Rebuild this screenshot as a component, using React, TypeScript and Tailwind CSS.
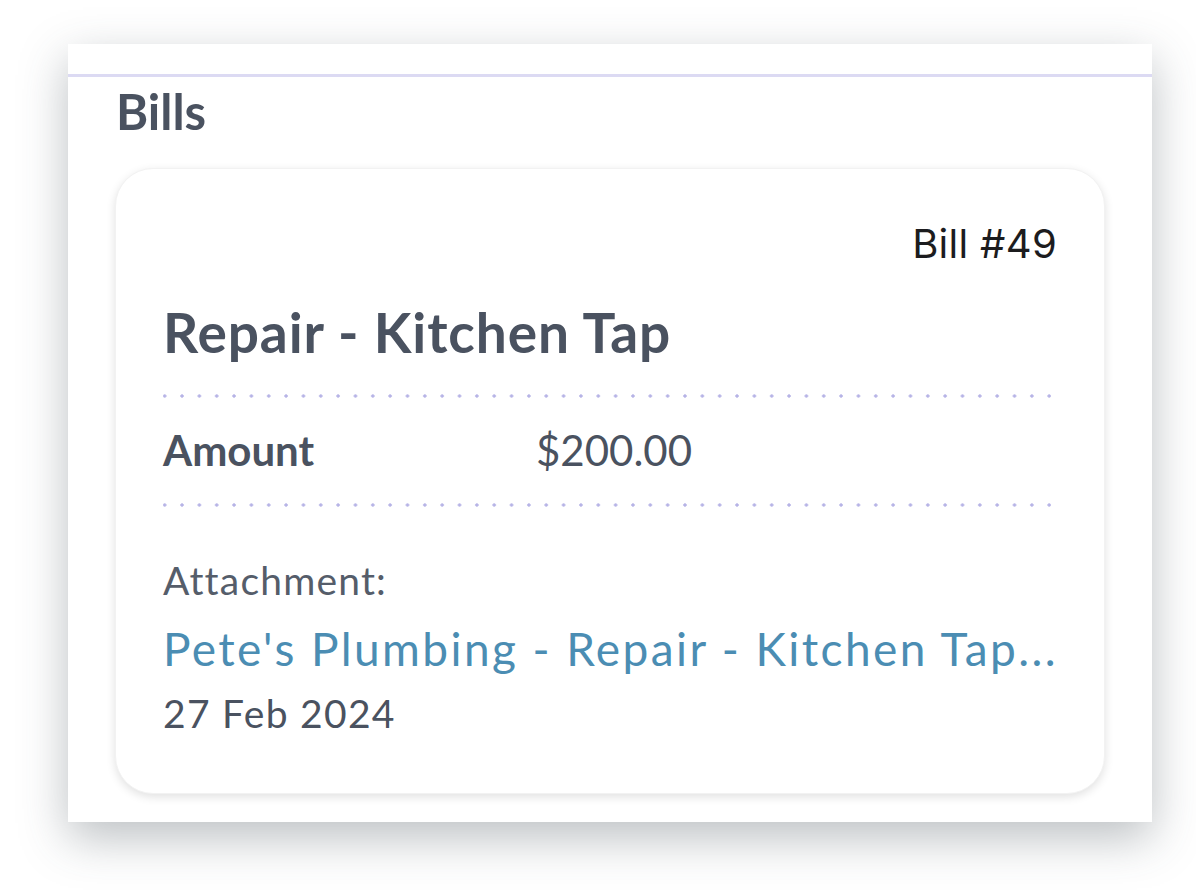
import React from "react";

function Dots() {
  return (
    <div className="h-[4px] w-[888px] bg-[radial-gradient(circle,#b6b3e6_1.4px,transparent_1.9px)] bg-[length:17.35px_4px] bg-repeat-x bg-[position:-7px_0]" />
  );
}

export default function App() {
  return (
    <div className="w-[1196px] h-[890px] bg-white pt-[44px] pl-[68px] font-['Lato',sans-serif]">
      <div className="w-[1084px] h-[778px] bg-white shadow-[0_16px_44px_rgba(60,70,80,0.34)] flex flex-col">
        <div className="h-[30px]" />
        <div className="h-[3px] bg-[#dcdaf3]" />
        <h2 className="pl-[48px] mt-[6px] text-[49px] leading-[56px] font-bold tracking-[0px] text-[#4a5260]">Bills</h2>
        <div className="ml-[47px] mt-[29px] w-[990px] h-[626px] rounded-[38px] bg-white shadow-[0_3px_10px_rgba(0,0,0,0.12)] border border-[#f2f2f2] px-[47px] flex flex-col">
          <div className="mt-[51px] self-end text-[40px] leading-[48px] text-[#1c1c1e] font-['Inter',sans-serif] tracking-[0.3px]">Bill #49</div>
          <div className="mt-[32px] text-[55px] leading-[64px] font-bold tracking-[0.9px] text-[#4a5260]">Repair - Kitchen Tap</div>
          <div className="mt-[30px]"><Dots /></div>
          <div className="mt-[26px] flex items-baseline text-[42px] leading-[52px] text-[#4a5260]">
            <span className="w-[373px] font-bold">Amount</span>
            <span className="font-normal">$200.00</span>
          </div>
          <div className="mt-[27px]"><Dots /></div>
          <div className="mt-[50px] text-[39px] leading-[46px] tracking-[1.2px] text-[#555d6a]">Attachment:</div>
          <div className="mt-[19px] text-[46px] leading-[54px] tracking-[2.4px] text-[#4b8db3] whitespace-nowrap">Pete's Plumbing - Repair - Kitchen Tap...</div>
          <div className="mt-[14px] text-[39px] leading-[46px] tracking-[1.3px] text-[#4a5260]">27 Feb 2024</div>
        </div>
      </div>
    </div>
  );
}
